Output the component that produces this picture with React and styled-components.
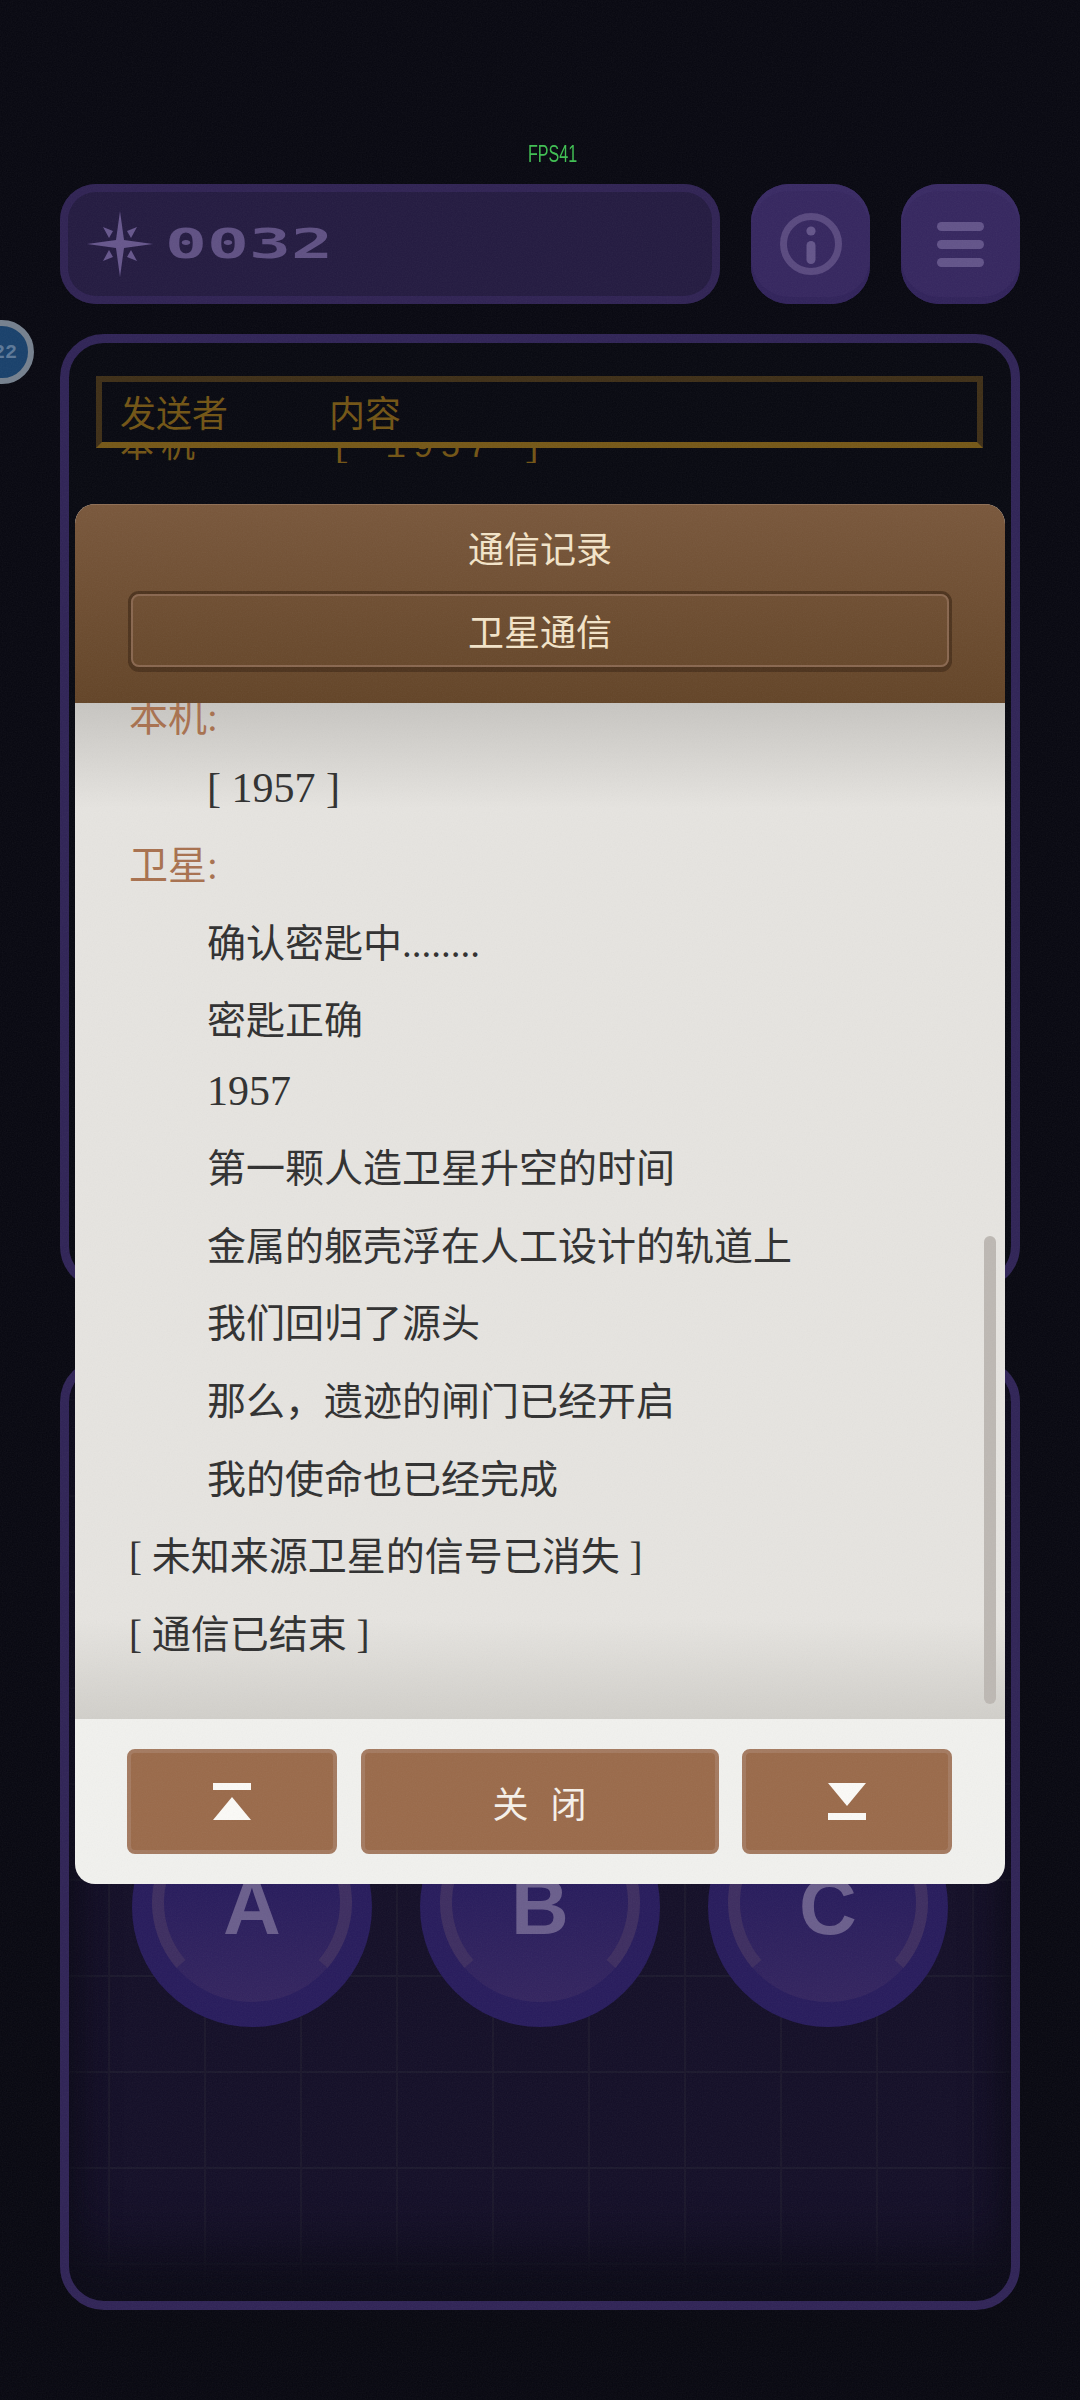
import React from "react"
import styled, { createGlobalStyle } from "styled-components"

const serif = `"Liberation Serif", "Noto Sans CJK SC", serif`

const GlobalStyle = createGlobalStyle`
  html, body {
    margin: 0;
    padding: 0;
    background: #070710;
  }
  #root {
    width: 1080px;
    height: 2400px;
    overflow: hidden;
  }
`

const Screen = styled.div`
  position: relative;
  width: 1080px;
  height: 2400px;
  padding: 184px 60px 0;
  box-sizing: border-box;
  overflow: hidden;
  background: #070710;
`

const Fps = styled.div`
  position: absolute;
  left: 528px;
  top: 143px;
  font: 23px/22px "Liberation Sans", sans-serif;
  color: #3fc052;
  transform: scaleX(0.7);
  transform-origin: left center;
`

const Badge = styled.div`
  position: absolute;
  left: -30px;
  top: 320px;
  width: 64px;
  height: 64px;
  box-sizing: border-box;
  border: 6px solid #75808e;
  border-radius: 50%;
  background: #18406b;
  display: flex;
  align-items: center;
  justify-content: center;
  font: 700 20px "Liberation Mono", monospace;
  color: #5c7898;
  padding-left: 6px;
`

const TopRow = styled.div`
  display: flex;
  gap: 31px;
  height: 120px;
`

const ScoreBar = styled.div`
  flex: 1;
  display: flex;
  align-items: center;
  gap: 12px;
  padding-left: 27px;
  box-sizing: border-box;
  border-radius: 36px;
  background: #231a40;
  box-shadow: inset 0 0 0 8px #2f2253;
`

const Score = styled.span`
  font: 700 41px/1 "DejaVu Sans Mono", monospace;
  color: #5f5083;
  transform: scaleX(1.7);
  transform-origin: left center;
`

const SquareButton = styled.div`
  width: 119px;
  height: 120px;
  border-radius: 38px;
  display: flex;
  flex-direction: column;
  align-items: center;
  justify-content: center;
  gap: 9px;
  background: #35265f;
  box-shadow: inset 0 -7px 0 #30225a, inset 0 7px 0 #382963;
`

const MenuBar = styled.span`
  width: 47px;
  height: 9px;
  border-radius: 5px;
  background: #625389;
`

const Panel = styled.div`
  box-sizing: border-box;
  border: 9px solid #2f2356;
  border-radius: 44px;
  height: ${(p) => p.$height}px;
  margin-top: ${(p) => p.$top}px;
`

const LogPanel = styled(Panel)`
  padding: 33px 28px 0 27px;
  background: #070810;
`

const TableHead = styled.div`
  height: 72px;
  box-sizing: border-box;
  display: flex;
  align-items: center;
  padding: 0 0 3px 18px;
  border: 6px solid #3e2e16;
  border-bottom-color: #755716;
  font: 36px/1 "Noto Sans CJK SC", sans-serif;
  color: #725414;
`

const HeadCell = styled.span`
  width: ${(p) => p.$width || 209}px;
`

const PeekRow = styled.div`
  height: 15px;
  overflow: hidden;
  display: flex;
  align-items: flex-end;
  padding-left: 24px;
  font: 34px/30px "Liberation Mono", "Noto Sans CJK SC", monospace;
  letter-spacing: 6.9px;
  color: #725414;
`

const GamePanel = styled(Panel)`
  padding: 420px 0 0 63px;
  background-color: #130e27;
  background-image:
    linear-gradient(to right, #1a162b 2px, transparent 2px),
    linear-gradient(to bottom, #1b182d 2px, transparent 2px);
  background-size: 96px 96px;
  background-position: 39px 32px;
  box-shadow: inset 0 -70px 50px -20px #0a0916, inset 0 0 40px 6px #090814;
`

const RoundRow = styled.div`
  display: flex;
  gap: 48px;
`

const RoundButton = styled.div`
  position: relative;
  width: 240px;
  height: 240px;
  border-radius: 50%;
  background: #271b5c;
  display: flex;
  align-items: center;
  justify-content: center;
  font: 700 80px/1 "Liberation Sans", sans-serif;
  color: #6a5e8c;
`

const RoundFace = styled.svg`
  position: absolute;
  left: 20px;
  top: 15px;
  width: 200px;
  height: 200px;
`

const RoundLetter = styled.span`
  position: relative;
`

const Modal = styled.div`
  position: absolute;
  left: 75px;
  top: 504px;
  width: 930px;
  height: 1380px;
  display: flex;
  flex-direction: column;
  border-radius: 20px;
  overflow: hidden;
  background: #f1f1ee;
`

const ModalHead = styled.div`
  flex: 0 0 199px;
  box-sizing: border-box;
  padding: 20px 56px 0;
  background: linear-gradient(to bottom, #79573b, #634427);
  box-shadow: inset 0 1px 0 #8e6e54;
  text-align: center;
  font: 36px/46px "Noto Sans CJK SC", sans-serif;
  color: #f3e4c9;
`

const SourceTab = styled.div`
  margin-top: 24px;
  height: 73px;
  box-sizing: border-box;
  line-height: 68px;
  border: 2px solid #89674f;
  border-radius: 8px;
  box-shadow: 0 0 0 3px #4d331d, 0 2px 0 3px #4d331d;
`

const Transcript = styled.div`
  position: relative;
  flex: 1;
  overflow: hidden;
  background:
    linear-gradient(to bottom, #c7c5c1, rgba(199, 197, 193, 0) 105px),
    linear-gradient(to top, #d1cfca, rgba(209, 207, 202, 0) 100px),
    #e6e4e0;
`

const Lines = styled.div`
  margin-top: -24px;
  padding-left: 54px;
  font: 39px ${serif};
  color: #303030;
`

const Line = styled.div`
  font-size: ${(p) => (p.$short ? 42 : 39)}px;
  line-height: ${(p) => (p.$short ? 62 : 77.6)}px;
  padding-left: ${(p) => (p.$indent ? 78 : 0)}px;
  padding-bottom: ${(p) => (p.$short ? 8.4 : 0)}px;
  color: ${(p) => (p.$speaker ? "#a8714f" : "#303030")};
  white-space: pre;
`

const ScrollThumb = styled.div`
  position: absolute;
  left: 909px;
  top: 533px;
  width: 12px;
  height: 468px;
  border-radius: 6px;
  background: #bdb8b3;
`

const ModalFoot = styled.div`
  flex: 0 0 165px;
  box-sizing: border-box;
  display: flex;
  gap: 23.5px;
  padding: 30px 53px 30px 52px;
  height: 165px;
`

const FootButton = styled.div`
  flex: ${(p) => (p.$wide ? "1" : "0 0 210px")};
  height: 105px;
  box-sizing: border-box;
  display: flex;
  align-items: center;
  justify-content: center;
  border: 4px solid #a47a60;
  border-radius: 8px;
  background: #9a6a4a;
  font: 36px/1 "Noto Sans CJK SC", sans-serif;
  color: #f6f1ea;
`

const CloseLabel = styled.span`
  word-spacing: 14px;
`

const Grain = styled.svg`
  position: absolute;
  left: 0;
  top: 0;
  width: 1080px;
  height: 2400px;
  pointer-events: none;
  opacity: 0.06;
`

const transcript = [
  { text: "本机:", speaker: true },
  { text: "[ 1957 ]", indent: true, short: true },
  { text: "卫星:", speaker: true },
  { text: "确认密匙中........", indent: true },
  { text: "密匙正确", indent: true },
  { text: "1957", indent: true, short: true },
  { text: "第一颗人造卫星升空的时间", indent: true },
  { text: "金属的躯壳浮在人工设计的轨道上", indent: true },
  { text: "我们回归了源头", indent: true },
  { text: "那么，遗迹的闸门已经开启", indent: true },
  { text: "我的使命也已经完成", indent: true },
  { text: "[ 未知来源卫星的信号已消失 ]" },
  { text: "[ 通信已结束 ]" },
]

const StarIcon = () => (
  <svg width="66" height="66" viewBox="0 0 66 66" fill="#66568c">
    <path d="M33 0 L37 29 L66 33 L37 37 L33 66 L29 37 L0 33 L29 29Z" />
    <path d="M16 16 L26 20 L22 27Z M50 16 L40 20 L44 27Z M16 50 L26 46 L22 39Z M50 50 L40 46 L44 39Z" />
  </svg>
)

const InfoIcon = () => (
  <svg width="62" height="62" viewBox="0 0 62 62" fill="none">
    <circle cx="31" cy="31" r="27.5" stroke="#59497f" strokeWidth="7" />
    <circle cx="31" cy="18" r="4.6" fill="#64558a" />
    <rect x="26.5" y="28" width="9" height="23" rx="4.5" fill="#64558a" />
  </svg>
)

const JumpTopIcon = () => (
  <svg width="38" height="37" viewBox="0 0 38 37" fill="#fbfaf7">
    <rect width="38" height="7" />
    <path d="M19 14 L38 37 L0 37Z" />
  </svg>
)

const JumpEndIcon = () => (
  <svg width="38" height="37" viewBox="0 0 38 37" fill="#fbfaf7">
    <path d="M0 0 L38 0 L19 23Z" />
    <rect y="30" width="38" height="7" />
  </svg>
)

const Round = ({ id, letter }) => (
  <RoundButton>
    <RoundFace viewBox="0 0 200 200" fill="none">
      <defs>
        <linearGradient id={id} x1="0" y1="0" x2="0" y2="1">
          <stop offset="0.4" stopColor="#271b5c" />
          <stop offset="1" stopColor="#33245f" />
        </linearGradient>
      </defs>
      <circle cx="100" cy="100" r="100" fill={`url(#${id})`} />
      <path d="M29 162 A94 94 0 1 1 171 162" stroke="#3d2d60" strokeWidth="12" />
    </RoundFace>
    <RoundLetter>{letter}</RoundLetter>
  </RoundButton>
)

const App = () => {
  return (
    <Screen>
      <GlobalStyle />
      <Fps>FPS41</Fps>
      <Badge>22</Badge>
      <TopRow>
        <ScoreBar>
          <StarIcon />
          <Score>0032</Score>
        </ScoreBar>
        <SquareButton>
          <InfoIcon />
        </SquareButton>
        <SquareButton>
          <MenuBar />
          <MenuBar />
          <MenuBar />
        </SquareButton>
      </TopRow>
      <LogPanel $height={956} $top={30}>
        <TableHead>
          <HeadCell>发送者</HeadCell>
          <HeadCell>内容</HeadCell>
        </TableHead>
        <PeekRow>
          <HeadCell $width={211}>本机</HeadCell>
          <span>[ 1957 ]</span>
        </PeekRow>
      </LogPanel>
      <GamePanel $height={952} $top={68}>
        <RoundRow>
          <Round id="faceA" letter="A" />
          <Round id="faceB" letter="B" />
          <Round id="faceC" letter="C" />
        </RoundRow>
      </GamePanel>
      <Modal>
        <ModalHead>
          通信记录
          <SourceTab>卫星通信</SourceTab>
        </ModalHead>
        <Transcript>
          <Lines>
            {transcript.map((line) => (
              <Line key={line.text} $indent={line.indent} $short={line.short} $speaker={line.speaker}>
                {line.text}
              </Line>
            ))}
          </Lines>
          <ScrollThumb />
        </Transcript>
        <ModalFoot>
          <FootButton>
            <JumpTopIcon />
          </FootButton>
          <FootButton $wide>
            <CloseLabel>关 闭</CloseLabel>
          </FootButton>
          <FootButton>
            <JumpEndIcon />
          </FootButton>
        </ModalFoot>
      </Modal>
      <Grain>
        <filter id="grain">
          <feTurbulence type="fractalNoise" baseFrequency="0.8" numOctaves="2" />
          <feColorMatrix type="saturate" values="0" />
        </filter>
        <rect width="1080" height="2400" filter="url(#grain)" />
      </Grain>
    </Screen>
  )
}

export default App
